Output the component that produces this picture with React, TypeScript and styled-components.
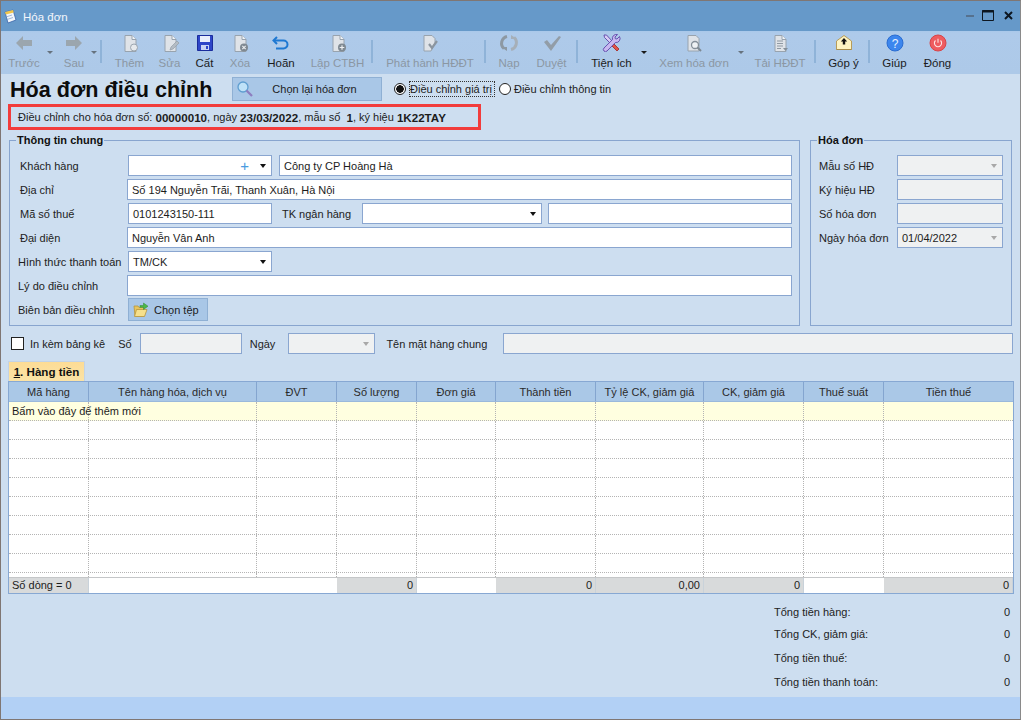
import React from "react";
import styled, { createGlobalStyle } from "styled-components";

const GlobalStyle = createGlobalStyle`
  html, body {
    margin: 0;
    padding: 0;
    background: #cddef0;
  }
  body {
    font-family: "Liberation Sans", Arial, sans-serif;
    font-size: 11px;
    color: #1c1c1c;
  }
`;

const Win = styled.div`
  width: 1021px;
  height: 720px;
  box-sizing: border-box;
  border: 1px solid #7f7673;
  border-right-color: #8a8a8a;
  display: flex;
  flex-direction: column;
  background: #cddef0;
  overflow: hidden;
`;

const TitleBar = styled.div`
  height: 30px;
  flex: none;
  display: flex;
  align-items: center;
  padding: 0 7px 0 3px;
  background: #6699c9;
  color: #f2f6fb;
`;

const TitleText = styled.span`
  margin-left: 6px;
  font-size: 11.5px;
  flex: 1;
  padding-top: 2px;
`;

const WinControls = styled.div`
  display: flex;
  align-items: center;
  gap: 8px;
  padding-bottom: 1px;
`;

const Toolbar = styled.div`
  height: 43px;
  flex: none;
  display: flex;
  background: linear-gradient(180deg, #a9c8ea 0, #aecaea 2px, #adc9e8 100%);
`;

const ToolBtn = styled.div<{ $w: number; $off?: boolean }>`
  width: ${(p) => p.$w}px;
  flex: none;
  display: flex;
  flex-direction: column;
  align-items: center;
  padding-top: 3px;
  color: ${(p) => (p.$off ? "#8b97a3" : "#1c1c1c")};
  white-space: nowrap;
`;

const ToolIcon = styled.div`
  height: 18px;
  display: flex;
  align-items: center;
  justify-content: center;
`;

const ToolLabel = styled.div`
  margin-top: 4px;
  line-height: 14px;
  font-size: 11.5px;
`;

const CaretSlot = styled.div<{ $w: number }>`
  width: ${(p) => p.$w}px;
  flex: none;
  padding-top: 20px;
  box-sizing: border-box;
`;

const Caret = styled.div<{ $off?: boolean }>`
  width: 0;
  height: 0;
  border-left: 3px solid transparent;
  border-right: 3px solid transparent;
  border-top: 3px solid ${(p) => (p.$off ? "#66727e" : "#1a1a1a")};
`;

const ToolSep = styled.div`
  width: 2px;
  flex: none;
  height: 23px;
  margin: 9px 4px 0 1px;
  background: #8fb3d8;
`;

const Body = styled.div`
  flex: 1;
  display: flex;
  flex-direction: column;
  padding: 3px 6px 0 7px;
  min-height: 0;
`;

const HeadRow = styled.div`
  display: flex;
  align-items: center;
  height: 24px;
`;

const Heading = styled.h1`
  margin: 0 0 0 2px;
  padding-top: 2px;
  width: 222px;
  font-size: 21.6px;
  font-weight: 700;
  color: #0c0c0c;
  line-height: 24px;
  white-space: nowrap;
`;

const PickButton = styled.div`
  width: 150px;
  height: 24px;
  box-sizing: border-box;
  border: 1px solid #8fb0d4;
  background: #a9c7e7;
  display: flex;
  align-items: center;
  padding-left: 3px;
`;

const PickText = styled.span`
  flex: 1;
  text-align: center;
  padding-right: 6px;
`;

const RadioItem = styled.div<{ $ml: number }>`
  display: flex;
  align-items: center;
  margin-left: ${(p) => p.$ml}px;
`;

const RadioDot = styled.div<{ $on?: boolean }>`
  width: 12px;
  height: 12px;
  box-sizing: border-box;
  border: 1px solid #222;
  border-radius: 50%;
  background: ${(p) => (p.$on ? "radial-gradient(circle, #111 0 3.5px, #fff 4px)" : "#fff")};
`;

const RadioText = styled.span<{ $focus?: boolean }>`
  margin-left: ${(p) => (p.$focus ? 4 : 3)}px;
  padding-right: ${(p) => (p.$focus ? 2 : 0)}px;
  line-height: 14px;
  outline: ${(p) => (p.$focus ? "1px dotted #333" : "none")};
  white-space: nowrap;
`;

const Notice = styled.div`
  width: 473px;
  height: 26px;
  box-sizing: border-box;
  margin-top: 3px;
  border: 3px solid #f23c3c;
  padding-left: 7px;
  display: flex;
  align-items: center;
  white-space: pre;
  background: #cddef0;

  b {
    font-size: 11.6px;
  }
`;

const Panels = styled.div`
  display: flex;
  gap: 10px;
  margin: 3px 0 0 1px;
`;

const Group = styled.fieldset<{ $w: number }>`
  width: ${(p) => p.$w}px;
  height: 193px;
  flex: none;
  box-sizing: border-box;
  margin: 0;
  border: 1px solid #88a5cf;
  padding: 8px 7px 0 8px;
`;

const GroupTitle = styled.legend`
  margin-left: -2px;
  padding: 0 1px;
  font-weight: 700;
  line-height: 14px;
  color: #111;
`;

const FormRow = styled.div`
  display: flex;
  align-items: center;
  height: 21px;
  margin-bottom: 3px;
`;

const Label = styled.div<{ $w: number; $indent?: number }>`
  width: ${(p) => p.$w}px;
  flex: none;
  box-sizing: border-box;
  padding-left: ${(p) => p.$indent ?? 0}px;
  white-space: nowrap;
  color: #222;
`;

const Field = styled.div<{ $w?: number; $off?: boolean; $ml?: number }>`
  ${(p) => (p.$w ? `width: ${p.$w}px; flex: none;` : "flex: 1; min-width: 0;")}
  height: 21px;
  box-sizing: border-box;
  margin-left: ${(p) => p.$ml ?? 0}px;
  border: 1px solid #8aa6d0;
  background: ${(p) => (p.$off ? "#eff1f2" : "#fff")};
  padding: 0 5px 0 4px;
  display: flex;
  align-items: center;
  white-space: nowrap;
`;

const FieldText = styled.span`
  flex: 1;
`;

const Plus = styled.span`
  color: #4a9be0;
  font-size: 15px;
  line-height: 15px;
  margin-right: 11px;
`;

const FieldCaret = styled.div<{ $off?: boolean }>`
  width: 0;
  height: 0;
  flex: none;
  border-left: 3.5px solid transparent;
  border-right: 3.5px solid transparent;
  border-top: 4px solid ${(p) => (p.$off ? "#a8a8a8" : "#111")};
`;

const FileButton = styled.div`
  width: 80px;
  height: 23px;
  box-sizing: border-box;
  border: 1px solid #8fb0d4;
  background: #a9c7e7;
  display: flex;
  align-items: center;
  gap: 5px;
  padding-left: 4px;
`;

const ExtraRow = styled.div`
  display: flex;
  align-items: center;
  height: 21px;
  margin: 7px 0 0 3px;
`;

const CheckBox = styled.div`
  width: 13px;
  height: 13px;
  flex: none;
  box-sizing: border-box;
  border: 1px solid #222;
  background: #fff;
`;

const InlineLabel = styled.span<{ $ml: number }>`
  margin-left: ${(p) => p.$ml}px;
  white-space: nowrap;
  color: #222;
`;

const Tab = styled.div`
  width: 77px;
  height: 20px;
  box-sizing: border-box;
  margin-top: 7px;
  border: 1px solid #c3d3e6;
  border-bottom: none;
  background: linear-gradient(180deg, #fddc95, #fbe3a6);
  font-size: 11.6px;
  font-weight: 700;
  display: flex;
  align-items: center;
  justify-content: center;
  white-space: pre;
  color: #111;

  u {
    font-weight: 700;
  }
`;

const Table = styled.div`
  width: 1006px;
  box-sizing: border-box;
  border: 1px solid #87a8d3;
  background: #fff;
  flex: none;
`;

const gridCols = "80px 168px 80px 80px 79px 100px 108px 100px 80px 129px";

const HeadRowGrid = styled.div`
  display: grid;
  grid-template-columns: ${gridCols};
  height: 20px;
  background: #aac8e7;
  border-bottom: 1px solid #9ab9dc;
  box-sizing: border-box;
`;

const HeadCell = styled.div`
  border-right: 1px solid #84a5cf;
  display: flex;
  align-items: center;
  justify-content: center;
  color: #2a2a2a;
  white-space: nowrap;

  &:last-child {
    border-right: none;
  }
`;

const RowsBox = styled.div`
  height: 175px;
  overflow: hidden;
`;

const DataRow = styled.div<{ $hot?: boolean }>`
  display: grid;
  grid-template-columns: ${gridCols};
  height: 19px;
  box-sizing: border-box;
  border-bottom: 1px dotted #b4b4b4;
  background: ${(p) => (p.$hot ? "#ffffe0" : "#fff")};
`;

const DataCell = styled.div`
  border-right: 1px dotted #b4b4b4;
  padding-left: 3px;
  line-height: 18px;
  white-space: nowrap;

  &:last-child {
    border-right: none;
  }
`;

const FootRow = styled.div`
  display: grid;
  grid-template-columns: ${gridCols};
  height: 16px;
  box-sizing: border-box;
  border-top: 1px solid #c4c6c8;
`;

const FootCell = styled.div<{ $gray?: boolean; $span?: number; $left?: boolean }>`
  grid-column: span ${(p) => p.$span ?? 1};
  background: ${(p) => (p.$gray ? "#d8dadb" : "#fff")};
  border-right: 1px solid ${(p) => (p.$gray ? "#c9d2da" : "#fff")};
  text-align: ${(p) => (p.$left ? "left" : "right")};
  padding: 0 3px;
  line-height: 15px;
  white-space: nowrap;
`;

const Totals = styled.div`
  display: grid;
  grid-template-rows: 22px 24px 24px 16px;
  margin: 11px 4px 0 766px;
`;

const TotalRow = styled.div`
  display: flex;
  justify-content: space-between;
  align-items: flex-start;
  line-height: 14px;
  color: #222;
`;

const StatusBar = styled.div`
  margin-top: auto;
  height: 22px;
  flex: none;
  background: #b2d0f5;
`;

const Svg = styled.svg`
  display: block;
`;

const DocBase = () => (
  <>
    <path d="M5 1.5h7l4 4v12H5z" fill="#dfe3e8" stroke="#98a3ae" />
    <path d="M12 1.5v4h4" fill="#f3f5f7" stroke="#98a3ae" />
  </>
);

const icons: Record<string, React.ReactNode> = {
  back: (
    <Svg width="20" height="18" viewBox="0 0 20 18">
      <path d="M2 9l7-7v4h9v6H9v4z" fill="#9ba6ae" />
    </Svg>
  ),
  forward: (
    <Svg width="20" height="18" viewBox="0 0 20 18">
      <path d="M18 9l-7-7v4H2v6h9v4z" fill="#9ba6ae" />
    </Svg>
  ),
  add: (
    <Svg width="20" height="18" viewBox="0 0 20 18">
      <DocBase />
      <circle cx="14" cy="13.5" r="3.5" fill="#e6e9ec" stroke="#9ba5af" />
    </Svg>
  ),
  edit: (
    <Svg width="20" height="18" viewBox="0 0 20 18">
      <DocBase />
      <path d="M10 16l1-3 6-6 2 2-6 6z" fill="#b4bcc4" stroke="#949ea8" strokeWidth="0.7" />
    </Svg>
  ),
  save: (
    <Svg width="18" height="18" viewBox="0 0 18 18">
      <path d="M1.5 1.5h15v15h-15z" fill="#2e46c8" stroke="#1a2c9c" />
      <path d="M4 2h10v6H4z" fill="#e8eefc" />
      <path d="M5 11h8v5H5z" fill="#c8d4f4" />
      <path d="M10 12h2v3h-2z" fill="#2e46c8" />
    </Svg>
  ),
  remove: (
    <Svg width="20" height="18" viewBox="0 0 20 18">
      <DocBase />
      <circle cx="14" cy="13.5" r="4" fill="#7f8992" />
      <path d="M12.3 11.8l3.4 3.4m0-3.4l-3.4 3.4" stroke="#e8ebee" strokeWidth="1.2" />
    </Svg>
  ),
  undo: (
    <Svg width="20" height="18" viewBox="0 0 20 18">
      <path d="M6 3L2.5 6.5 6 10" fill="none" stroke="#1e78d2" strokeWidth="2" />
      <path d="M3 6.5h9.5a3.7 3.7 0 0 1 0 8H5" fill="none" stroke="#1e78d2" strokeWidth="2" />
    </Svg>
  ),
  create: (
    <Svg width="20" height="18" viewBox="0 0 20 18">
      <DocBase />
      <circle cx="14" cy="13.5" r="4" fill="#7f8992" />
      <path d="M14 11.2v4.6m-2.3-2.3h4.6" stroke="#eef0f2" strokeWidth="1.2" />
    </Svg>
  ),
  publish: (
    <Svg width="20" height="18" viewBox="0 0 20 18">
      <path d="M4 1.5h8l3 3v4L11 17H4z" fill="#dfe3e8" stroke="#98a3ae" />
      <path d="M9 10l3 4 5-7" fill="none" stroke="#8b959f" strokeWidth="2.2" />
    </Svg>
  ),
  reload: (
    <Svg width="20" height="18" viewBox="0 0 20 18">
      <path d="M8 2.5A7 7 0 0 0 5 14.6" fill="none" stroke="#8d98a2" strokeWidth="3" />
      <path d="M12 15.5A7 7 0 0 0 15 3.4" fill="none" stroke="#a6afb8" strokeWidth="3" />
      <path d="M2 13h6v4z" fill="#8d98a2" />
      <path d="M18 5h-6V1z" fill="#a6afb8" />
    </Svg>
  ),
  approve: (
    <Svg width="20" height="18" viewBox="0 0 20 18">
      <path d="M2 8l3-2 4 5 8-9 2 1-10 14z" fill="#929da7" />
    </Svg>
  ),
  tools: (
    <Svg width="20" height="18" viewBox="0 0 20 18">
      <path d="M2 1l2.5 0 6 6.5-2 2L2.5 3.5z" fill="#d8ccf4" stroke="#5c45a8" strokeWidth="0.9" />
      <path d="M10.5 8.5l6.5 6.5-2 2-6.5-6.5z" fill="#e0534a" stroke="#a8302c" strokeWidth="0.9" />
      <path
        d="M17.5 2.5L15 5l-1.7-.3-.3-1.700L15.500 .6a4 4 0 0 0-5 5L2 14a2 2 0 0 0 3 3l8.400-8.500a4 4 0 0 0 4.100-6z"
        fill="#c8b8f0"
        stroke="#5c45a8"
        strokeWidth="0.9"
      />
    </Svg>
  ),
  view: (
    <Svg width="20" height="18" viewBox="0 0 20 18">
      <path d="M4 1.5h8l3 3V17H4z" fill="#dfe3e8" stroke="#98a3ae" />
      <circle cx="11" cy="11" r="3.5" fill="#eef1f4" stroke="#848f99" strokeWidth="1.3" />
      <path d="M13.5 13.5L17 17" stroke="#7e8993" strokeWidth="2" />
    </Svg>
  ),
  download: (
    <Svg width="20" height="18" viewBox="0 0 20 18">
      <DocBase />
      <path d="M7 7h6M7 9.5h6M7 12h6M7 14.5h4" stroke="#8f99a3" />
      <path d="M13 14h5l-2.5 3z" fill="#848f99" />
    </Svg>
  ),
  feedback: (
    <Svg width="20" height="18" viewBox="0 0 20 18">
      <path d="M2.5 7L10 1.5 17.5 7v8.500h-15z" fill="#fdf3c2" stroke="#b79c5a" />
      <path d="M10 4l3.200 3.500h-2v3H8.800v-3h-2z" fill="#111" />
      <path d="M2.5 15.5h15" stroke="#a88c4a" />
    </Svg>
  ),
  help: (
    <Svg width="18" height="18" viewBox="0 0 18 18">
      <circle cx="9" cy="9" r="8" fill="#3c86ee" stroke="#2a6cd0" />
      <text x="9" y="13.5" textAnchor="middle" fontSize="12" fill="#e8f2ff" fontFamily="Liberation Sans">
        ?
      </text>
    </Svg>
  ),
  close: (
    <Svg width="18" height="18" viewBox="0 0 18 18">
      <circle cx="9" cy="9" r="8" fill="#ee5c60" stroke="#d84448" />
      <path d="M6.5 6.5a3.6 3.6 0 1 0 5 0" fill="none" stroke="#fde4e4" strokeWidth="1.1" />
      <path d="M9 4.7v4" stroke="#fde4e4" strokeWidth="1.1" />
    </Svg>
  ),
};

const AppIcon = () => (
  <Svg width="13" height="15" viewBox="0 0 13 15">
    <path d="M1 3l8-2 3 10-8 3z" fill="#f4f7fb" stroke="#3a64a8" strokeWidth="0.8" />
    <path d="M1 3l8-2 .8 2.6-8 2z" fill="#f2c64a" />
    <path d="M2 8l6-2M3 10.5l6-2" stroke="#7e9cc8" strokeWidth="0.7" />
  </Svg>
);

const LensIcon = () => (
  <Svg width="18" height="18" viewBox="0 0 18 18">
    <circle cx="7" cy="7" r="5" fill="#bfe2f8" stroke="#5f9ed0" strokeWidth="1.3" />
    <path d="M10.5 10.5L16 16" stroke="#8d7ec0" strokeWidth="2.3" />
  </Svg>
);

const FolderIcon = () => (
  <Svg width="16" height="16" viewBox="0 0 16 16">
    <path d="M1 4h4l1 1.500h5V14H2z" fill="#e8c55c" stroke="#b8963c" strokeWidth="0.8" />
    <path d="M3.5 7.5H14L11.5 14.5H1.5z" fill="#f6e08c" stroke="#b8963c" strokeWidth="0.8" />
    <path d="M7 3.5h3.500V1L15 4.200 10.500 7.500V5.300H7z" fill="#4cb848" stroke="#2e8a30" strokeWidth="0.5" />
  </Svg>
);

type Tool =
  | { kind: "btn"; label: string; icon: string; w: number; off?: boolean }
  | { kind: "sep" }
  | { kind: "caret"; w: number; off?: boolean };

const tools: Tool[] = [
  { kind: "btn", label: "Trước", icon: "back", w: 46, off: true },
  { kind: "caret", w: 10, off: true },
  { kind: "btn", label: "Sau", icon: "forward", w: 34, off: true },
  { kind: "caret", w: 8, off: true },
  { kind: "sep" },
  { kind: "btn", label: "Thêm", icon: "add", w: 47, off: true },
  { kind: "btn", label: "Sửa", icon: "edit", w: 33, off: true },
  { kind: "btn", label: "Cất", icon: "save", w: 37 },
  { kind: "btn", label: "Xóa", icon: "remove", w: 34, off: true },
  { kind: "btn", label: "Hoãn", icon: "undo", w: 48 },
  { kind: "btn", label: "Lập CTBH", icon: "create", w: 65, off: true },
  { kind: "sep" },
  { kind: "btn", label: "Phát hành HĐĐT", icon: "publish", w: 106, off: true },
  { kind: "sep" },
  { kind: "btn", label: "Nạp", icon: "reload", w: 38, off: true },
  { kind: "btn", label: "Duyệt", icon: "approve", w: 47, off: true },
  { kind: "sep" },
  { kind: "btn", label: "Tiện ích", icon: "tools", w: 59 },
  { kind: "caret", w: 9 },
  { kind: "btn", label: "Xem hóa đơn", icon: "view", w: 88, off: true },
  { kind: "caret", w: 9, off: true },
  { kind: "btn", label: "Tải HĐĐT", icon: "download", w: 66, off: true },
  { kind: "sep" },
  { kind: "btn", label: "Góp ý", icon: "feedback", w: 47 },
  { kind: "sep" },
  { kind: "btn", label: "Giúp", icon: "help", w: 41 },
  { kind: "btn", label: "Đóng", icon: "close", w: 45 },
];

const columns = ["Mã hàng", "Tên hàng hóa, dịch vụ", "ĐVT", "Số lượng", "Đơn giá", "Thành tiền", "Tỷ lệ CK, giảm giá", "CK, giảm giá", "Thuế suất", "Tiền thuế"];

const totals = ["Tổng tiền hàng:", "Tổng CK, giảm giá:", "Tổng tiền thuế:", "Tổng tiền thanh toán:"];

export default function App() {
  return (
    <Win>
      <GlobalStyle />
      <TitleBar>
        <AppIcon />
        <TitleText>Hóa đơn</TitleText>
        <WinControls>
          <Svg width="8" height="12" viewBox="0 0 8 12">
            <path d="M0 6h8" stroke="#56718e" strokeWidth="2" />
          </Svg>
          <Svg width="12" height="11" viewBox="0 0 12 11">
            <path d="M.5 .5h11v10H.5z" fill="none" stroke="#0d1620" />
            <path d="M0 1.5h12" stroke="#0d1620" strokeWidth="2" />
          </Svg>
          <Svg width="9" height="9" viewBox="0 0 9 9" style={{ marginLeft: 2 }}>
            <path d="M1 1l7 7m0-7L1 8" stroke="#0d1620" strokeWidth="2" />
          </Svg>
        </WinControls>
      </TitleBar>

      <Toolbar>
        {tools.map((t, i) => {
          if (t.kind === "sep") return <ToolSep key={i} />;
          if (t.kind === "caret")
            return (
              <CaretSlot key={i} $w={t.w}>
                <Caret $off={t.off} />
              </CaretSlot>
            );
          return (
            <ToolBtn key={i} $w={t.w} $off={t.off}>
              <ToolIcon>{icons[t.icon]}</ToolIcon>
              <ToolLabel>{t.label}</ToolLabel>
            </ToolBtn>
          );
        })}
      </Toolbar>

      <Body>
        <HeadRow>
          <Heading>Hóa đơn điều chỉnh</Heading>
          <PickButton>
            <LensIcon />
            <PickText>Chọn lại hóa đơn</PickText>
          </PickButton>
          <RadioItem $ml={12}>
            <RadioDot $on />
            <RadioText $focus>Điều chỉnh giá trị</RadioText>
          </RadioItem>
          <RadioItem $ml={5}>
            <RadioDot />
            <RadioText>Điều chỉnh thông tin</RadioText>
          </RadioItem>
        </HeadRow>

        <Notice>
          Điều chỉnh cho hóa đơn số: <b>00000010</b>, ngày <b>23/03/2022</b>, mẫu số  <b>1</b>, ký hiệu <b>1K22TAY</b>
        </Notice>

        <Panels>
          <Group $w={791}>
            <GroupTitle>Thông tin chung</GroupTitle>
            <FormRow>
              <Label $w={110} $indent={2}>Khách hàng</Label>
              <Field $w={144}>
                <FieldText />
                <Plus>+</Plus>
                <FieldCaret />
              </Field>
              <Field $ml={7}>Công ty CP Hoàng Hà</Field>
            </FormRow>
            <FormRow>
              <Label $w={109} $indent={2}>Địa chỉ</Label>
              <Field>Số 194 Nguyễn Trãi, Thanh Xuân, Hà Nội</Field>
            </FormRow>
            <FormRow>
              <Label $w={110} $indent={2}>Mã số thuế</Label>
              <Field $w={144}>0101243150-111</Field>
              <Label $w={90} $indent={10}>TK ngân hàng</Label>
              <Field $w={180}>
                <FieldText />
                <FieldCaret />
              </Field>
              <Field $ml={6} />
            </FormRow>
            <FormRow>
              <Label $w={109} $indent={2}>Đại diện</Label>
              <Field>Nguyễn Vân Anh</Field>
            </FormRow>
            <FormRow>
              <Label $w={110}>Hình thức thanh toán</Label>
              <Field $w={144}>
                <FieldText>TM/CK</FieldText>
                <FieldCaret />
              </Field>
            </FormRow>
            <FormRow>
              <Label $w={109}>Lý do điều chỉnh</Label>
              <Field />
            </FormRow>
            <FormRow>
              <Label $w={110}>Biên bản điều chỉnh</Label>
              <FileButton>
                <FolderIcon />
                Chọn tệp
              </FileButton>
            </FormRow>
          </Group>

          <Group $w={202}>
            <GroupTitle>Hóa đơn</GroupTitle>
            <FormRow>
              <Label $w={78}>Mẫu số HĐ</Label>
              <Field $w={106} $off>
                <FieldText />
                <FieldCaret $off />
              </Field>
            </FormRow>
            <FormRow>
              <Label $w={78}>Ký hiệu HĐ</Label>
              <Field $w={106} $off />
            </FormRow>
            <FormRow>
              <Label $w={78}>Số hóa đơn</Label>
              <Field $w={106} $off />
            </FormRow>
            <FormRow>
              <Label $w={78}>Ngày hóa đơn</Label>
              <Field $w={106} $off>
                <FieldText>01/04/2022</FieldText>
                <FieldCaret $off />
              </Field>
            </FormRow>
          </Group>
        </Panels>

        <ExtraRow>
          <CheckBox />
          <InlineLabel $ml={6}>In kèm bảng kê</InlineLabel>
          <InlineLabel $ml={13}>Số</InlineLabel>
          <Field $w={102} $off $ml={8} />
          <InlineLabel $ml={8}>Ngày</InlineLabel>
          <Field $w={87} $off $ml={13}>
            <FieldText />
            <FieldCaret $off />
          </Field>
          <InlineLabel $ml={11}>Tên mặt hàng chung</InlineLabel>
          <Field $w={510} $off $ml={16} />
        </ExtraRow>

        <Tab>
          <span>
            <u>1</u>. Hàng tiền
          </span>
        </Tab>

        <Table>
          <HeadRowGrid>
            {columns.map((c) => (
              <HeadCell key={c}>{c}</HeadCell>
            ))}
          </HeadRowGrid>
          <RowsBox>
            {Array.from({ length: 10 }, (_, r) => (
              <DataRow key={r} $hot={r === 0}>
                {columns.map((c, i) => (
                  <DataCell key={c}>{r === 0 && i === 0 ? "Bấm vào đây để thêm mới" : null}</DataCell>
                ))}
              </DataRow>
            ))}
          </RowsBox>
          <FootRow>
            <FootCell $gray $left>Số dòng = 0</FootCell>
            <FootCell $span={2} />
            <FootCell $gray>0</FootCell>
            <FootCell />
            <FootCell $gray>0</FootCell>
            <FootCell $gray>0,00</FootCell>
            <FootCell $gray>0</FootCell>
            <FootCell />
            <FootCell $gray>0</FootCell>
          </FootRow>
        </Table>

        <Totals>
          {totals.map((t) => (
            <TotalRow key={t}>
              <span>{t}</span>
              <span>0</span>
            </TotalRow>
          ))}
        </Totals>
      </Body>

      <StatusBar />
    </Win>
  );
}
